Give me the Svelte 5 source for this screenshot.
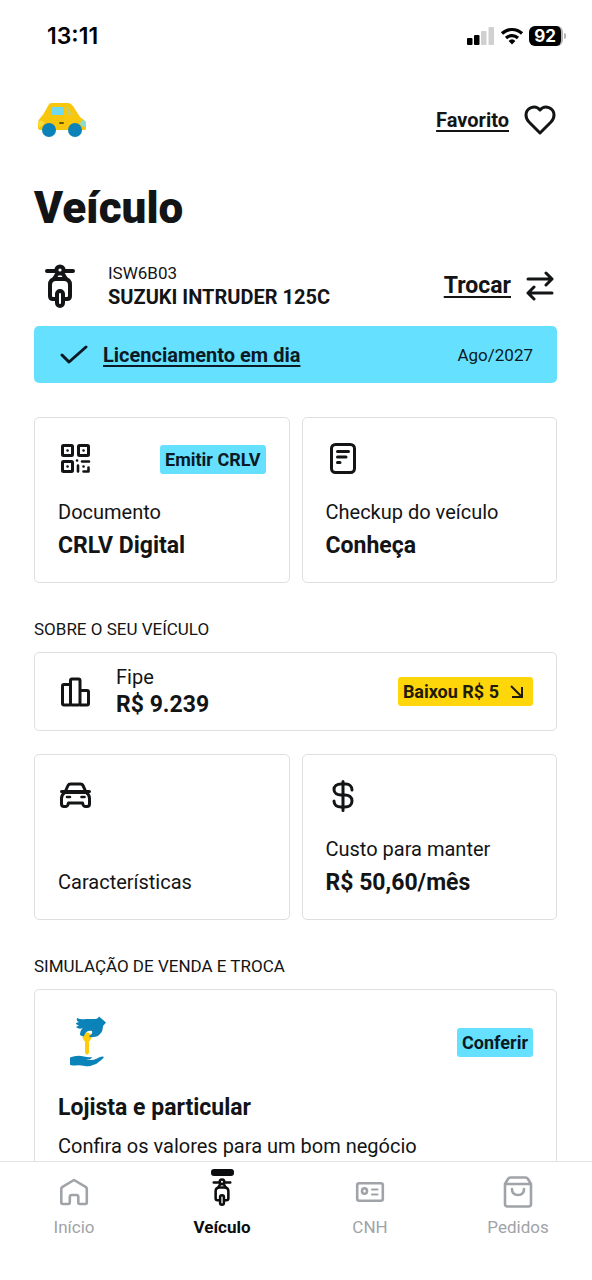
<script>
  let favorite = $state(false);
  let active = $state("veiculo");

  const tabs = [
    { id: "inicio", label: "Início" },
    { id: "veiculo", label: "Veículo" },
    { id: "cnh", label: "CNH" },
    { id: "pedidos", label: "Pedidos" },
  ];
</script>

{#snippet moto(size)}
  <svg width={size} height={size} viewBox="0 0 44 44" fill="none" stroke="currentColor" stroke-width="4" stroke-linecap="round" stroke-linejoin="round">
    <path d="M9 7h8M27 7h8" />
    <circle cx="22" cy="6" r="3.600" />
    <path d="M19 10l-3 5M25 10l3 5" />
    <path d="M17 35h-2q-3 0-3-3V21q0-6 6-6h8q6 0 6 6v11q0 3-3 3h-2" />
    <rect x="19" y="27" width="6" height="15" rx="3" />
  </svg>
{/snippet}

<div class="app">
  <div class="status">
    <span class="time">13:11</span>
    <div class="status_icons">
      <svg width="28" height="20" viewBox="0 0 28 20">
        <rect x="0" y="12" width="5.500" height="7" rx="1" />
        <rect x="7" y="9" width="5.500" height="10" rx="1" />
        <rect x="14" y="5" width="5.500" height="14" rx="1" fill="#d0d0d0" />
        <rect x="21.500" y="1" width="5.500" height="18" rx="1" fill="#d0d0d0" />
      </svg>
      <svg width="24" height="20" viewBox="0 0 24 20" fill="none" stroke="#000" stroke-width="3.200">
        <path d="M2 7.500a14.500 14.500 0 0 1 20 0" />
        <path d="M6 12a9 9 0 0 1 12 0" />
        <path d="M12 18.500l-3.400-3.600a5 5 0 0 1 6.800 0z" fill="#000" stroke="none" />
      </svg>
      <span class="battery"><span class="battery_level">92</span></span>
    </div>
  </div>

  <main>
    <header>
      <svg width="50" height="36" viewBox="0 0 50 36">
        <path d="M11 4q1-3 4-3h16q3 0 5 3l7 11 4 3q2 2 2 5v4q0 1-2 1H3q-2 0-2-2v-5q0-3 3-6 2-2 3-4z" fill="#f8c70d" />
        <path d="M16 5h10q1 0 1 1v7H14V7q0-2 2-2z" fill="#71d9ef" />
        <path d="M29 5h2l5 8h-5z" fill="#cfcc60" />
        <path d="M49 20v5q-4 0-6-3 1-4 4-4z" fill="#8bdcd0" />
        <path d="M1 21l3-3 3 2v2l-5 4z" fill="#f9db3c" />
        <rect x="22" y="20" width="5" height="2" rx="1" fill="#665a10" />
        <circle cx="12" cy="28" r="7" fill="#0c83b8" />
        <circle cx="38" cy="28" r="7" fill="#0c83b8" />
      </svg>
      <button class="favorite" aria-pressed={favorite} onclick={() => (favorite = !favorite)}>
        <span>Favorito</span>
        <svg width="32" height="30" viewBox="0 0 32 30" fill={favorite ? "currentColor" : "none"} stroke="currentColor" stroke-width="3" stroke-linejoin="round">
          <path d="M16 28L5 17Q2 14 2 10C2 3 11 -1 16 5 21 -1 30 3 30 10q0 4-3 7z" />
        </svg>
      </button>
    </header>

    <h1>Veículo</h1>

    <div class="vehicle">
      {@render moto(44)}
      <div class="vehicle_name">
        <p>ISW6B03</p>
        <strong>SUZUKI INTRUDER 125C</strong>
      </div>
      <button class="change">
        <span>Trocar</span>
        <svg width="28" height="30" viewBox="0 0 28 30" fill="none" stroke="currentColor" stroke-width="3" stroke-linecap="round" stroke-linejoin="round">
          <path d="M2 8h24M20 2l6 6-6 6M26 22H2M8 16l-6 6 6 6" />
        </svg>
      </button>
    </div>

    <a class="banner" href="#licenciamento">
      <svg width="28" height="20" viewBox="0 0 28 20" fill="none" stroke="currentColor" stroke-width="3" stroke-linecap="round" stroke-linejoin="round">
        <path d="M2 10l7 7L26 2" />
      </svg>
      <strong>Licenciamento em dia</strong>
      <span>Ago/2027</span>
    </a>

    <div class="cards">
      <a class="card" href="#crlv">
        <div class="card_top">
          <svg width="34" height="34" viewBox="0 0 34 34" fill="none" stroke="currentColor" stroke-width="3" stroke-linecap="round" stroke-linejoin="round">
            <rect x="4.500" y="3.500" width="10" height="10" rx="1" />
            <rect x="20.500" y="3.500" width="10" height="10" rx="1" />
            <rect x="4.500" y="19.500" width="10" height="10" rx="1" />
            <path d="M9.500 8.500h.1M25.500 8.500h.1M9.500 24.500h.1M19 18.500h.1M25.500 24.500h.1" stroke-width="2.600" />
            <path d="M20 23.500v6M24 19.500h7M25.500 29.500h5v-4" stroke-width="2.600" />
          </svg>
          <span class="badge">Emitir CRLV</span>
        </div>
        <p>Documento</p>
        <strong>CRLV Digital</strong>
      </a>
      <a class="card" href="#checkup">
        <div class="card_top">
          <svg width="34" height="34" viewBox="0 0 34 34" fill="none" stroke="currentColor" stroke-width="3" stroke-linecap="round" stroke-linejoin="round">
            <rect x="5.500" y="2.500" width="23" height="28" rx="4" />
            <path d="M11.500 9.500h11M11.500 15h8.500M11.500 20.500h2.500" />
          </svg>
        </div>
        <p>Checkup do veículo</p>
        <strong>Conheça</strong>
      </a>
    </div>

    <h2>SOBRE O SEU VEÍCULO</h2>

    <a class="fipe" href="#fipe">
      <svg width="34" height="34" viewBox="0 0 34 34" fill="none" stroke="currentColor" stroke-width="3" stroke-linejoin="round">
        <path d="M12.500 30H6q-1.500 0-1.500-1.500V11Q4.500 9.500 6 9.500h6.500M22 15.500h7q1.500 0 1.500 1.500v11.500q0 1.500-1.500 1.500h-7" />
        <rect x="12.500" y="4" width="9.500" height="26" rx="1.500" />
      </svg>
      <div class="fipe_value">
        <p>Fipe</p>
        <strong>R$ 9.239</strong>
      </div>
      <span class="badge yellow">
        Baixou R$ 5
        <svg width="14" height="14" viewBox="0 0 14 14" fill="none" stroke="currentColor" stroke-width="2">
          <path d="M1 1l11 11M12 2v10H2" />
        </svg>
      </span>
    </a>

    <div class="cards">
      <a class="card" href="#caracteristicas">
        <div class="card_top">
          <svg width="34" height="34" viewBox="0 0 34 34" fill="none" stroke="currentColor" stroke-width="3" stroke-linecap="round" stroke-linejoin="round">
            <path d="M7.500 12L10 6.500Q10.700 5 12.500 5h10q1.800 0 2.500 1.500L27.500 12M3.500 12.500h28" />
            <path d="M7 13.500h21q3.500 2 3.500 6V25q0 2.500-2.500 2.500h-1.500q-2 0-2.500-2l-.5-1.500h-14l-.5 1.500q-.5 2-2.500 2H6Q3.500 27.500 3.500 25v-5.500q0-4 3.500-6z" />
            <path d="M9 18h3M23.500 18h3" stroke-width="2.600" />
          </svg>
        </div>
        <p>Características</p>
      </a>
      <a class="card" href="#custo">
        <div class="card_top">
          <svg width="34" height="34" viewBox="0 0 34 34" fill="none" stroke="currentColor" stroke-width="3" stroke-linecap="round">
            <path d="M17 2.500v29M26 11c0-4-3-6-6-6h-5c-4 0-7 2-7 5.500s3 5.500 7 5.500h4c4 0 7 2 7 6s-3 6-7 6h-4c-4 0-7-2-7-6" />
          </svg>
        </div>
        <p>Custo para manter</p>
        <strong>R$ 50,60/mês</strong>
      </a>
    </div>

    <h2>SIMULAÇÃO DE VENDA E TROCA</h2>

    <a class="card offer" href="#simulacao">
      <div class="card_top">
        <svg width="56" height="56" viewBox="0 0 56 56">
          <circle cx="29" cy="23" r="4.500" fill="#ffcb0b" />
          <path d="M27 25h4v14l-2 2-2-2z" fill="#ffcb0b" />
          <path d="M19 4q4 2 9 1 5 0 9 0 3 0 4-2.500L48 8.500 45 12q0 5-3 8-2 3-7 3-3 1-4-1 4-2 3-5-6-1-8 5-1 1-4-1 0-5 3-7-4 2-7-1 2-1 3-2-3 0-3-2l3-1q-3-1-2-4z" fill="#0c83b8" />
          <path d="M12 43.500q7-3 14-1 4 1 8 .5-1 3-6 2.500 6 1.500 11-1 5-3 7-1.500-1 2-4 4-3 3-7 4-4 2-8 1-5-1-10-.5-5 0-5-1z" fill="#0c83b8" />
        </svg>
        <span class="badge">Conferir</span>
      </div>
      <strong>Lojista e particular</strong>
      <p>Confira os valores para um bom negócio</p>
    </a>
  </main>

  <nav>
    {#each tabs as tab}
      <button class:active={active === tab.id} onclick={() => (active = tab.id)}>
        <i></i>
        <div class="nav_icon">
          {#if tab.id === "inicio"}
            <svg width="32" height="32" viewBox="0 0 32 32" fill="none" stroke="currentColor" stroke-width="2.600" stroke-linejoin="round">
              <path d="M16 4L4.500 10.800q-1.200.7-1.200 2.200v13.500q0 1.500 1.500 1.500h5.500q1.500 0 1.500-1.500v-5.500q0-2 2-2h4.500q2 0 2 2v5.500q0 1.500 1.500 1.500h5.500q1.500 0 1.500-1.500V13q0-1.500-1.200-2.200z" />
            </svg>
          {:else if tab.id === "veiculo"}
            {@render moto(28)}
          {:else if tab.id === "cnh"}
            <svg width="32" height="32" viewBox="0 0 32 32" fill="none" stroke="currentColor" stroke-width="2.600" stroke-linecap="round">
              <rect x="3.200" y="7.200" width="25.600" height="17.600" rx="2" />
              <ellipse cx="10.500" cy="15" rx="2.500" ry="2.800" />
              <path d="M18 13.500h5.500M18 18.500h5.500" stroke-width="2.200" />
            </svg>
          {:else}
            <svg width="32" height="32" viewBox="0 0 32 32" fill="none" stroke="currentColor" stroke-width="2.600" stroke-linecap="round" stroke-linejoin="round">
              <path d="M3 8l3-5q1-1.500 2.500-1.500h15q1.500 0 2.500 1.500l3 5v20q0 2.500-2.500 2.500h-21Q3 30.500 3 28zM3 8h26" />
              <path d="M10 13q0 6 6 6t6-6" />
            </svg>
          {/if}
        </div>
        <span>{tab.label}</span>
      </button>
    {/each}
  </nav>
</div>

<style>
  :global(body) {
    background-color: #fff;
  }
  * {
    margin: 0;
    padding: 0;
    box-sizing: border-box;
  }
  svg {
    display: block;
    flex-shrink: 0;
  }
  button {
    border: 0;
    background: none;
    color: inherit;
    font: inherit;
    cursor: pointer;
  }
  a {
    color: inherit;
    text-decoration: none;
  }
  .app {
    height: 100vh;
    display: flex;
    flex-direction: column;
    font-family: Roboto, "Liberation Sans", sans-serif;
    color: #131415;
  }
  .status {
    height: 72px;
    flex-shrink: 0;
    padding: 0 26px 0 47px;
    display: flex;
    justify-content: space-between;
    align-items: center;
    color: #000;
    font-family: Inter, sans-serif;
  }
  .time {
    font-size: 23px;
    font-weight: 600;
  }
  .status_icons {
    display: flex;
    align-items: center;
    gap: 5px;
  }
  .battery {
    display: flex;
    align-items: center;
  }
  .battery::after {
    content: "";
    width: 2px;
    height: 6px;
    margin-left: 1px;
    border-radius: 0 2px 2px 0;
    background-color: #b4b4b4;
  }
  .battery_level {
    padding: 0 5px;
    border-radius: 6px;
    border-right: 2px solid #b4b4b4;
    background-color: #000;
    color: #fff;
    font-size: 17px;
    font-weight: 700;
    line-height: 20px;
  }
  main {
    flex: 1;
    min-height: 0;
    overflow: hidden;
    padding: 0 35px 0 34px;
  }
  header {
    height: 96px;
    padding-left: 3px;
    display: flex;
    justify-content: space-between;
    align-items: center;
  }
  .favorite, .change {
    display: flex;
    align-items: center;
    gap: 15px;
    font-weight: 700;
    text-decoration: underline;
    text-underline-offset: 3px;
  }
  .favorite {
    padding-right: 1px;
    font-size: 20px;
  }
  .change {
    margin-left: auto;
    padding-right: 3px;
    font-size: 23px;
  }
  h1 {
    font-size: 44px;
    font-weight: 900;
    line-height: 80px;
  }
  .vehicle {
    height: 78px;
    padding: 0 0 3px 4px;
    display: flex;
    align-items: center;
  }
  .vehicle_name {
    margin-left: 26px;
    font-size: 17px;
    line-height: 24px;
  }
  .vehicle_name strong {
    font-size: 20px;
  }
  .banner {
    height: 57px;
    padding: 0 24px 0 26px;
    display: flex;
    align-items: center;
    border-radius: 5px;
    background-color: #66e0ff;
    color: #0b1a24;
    font-size: 17px;
  }
  .banner strong {
    margin: 0 auto 0 15px;
    font-size: 20px;
    text-decoration: underline;
    text-underline-offset: 3px;
  }
  .cards {
    display: grid;
    grid-template-columns: 1fr 1fr;
    gap: 12px;
    margin-top: 34px;
  }
  .fipe + .cards {
    margin-top: 23px;
  }
  .card, .fipe {
    border: 1px solid #dfdfdf;
    border-radius: 5px;
    font-size: 20px;
  }
  .card {
    min-height: 166px;
    padding: 24px 23px 20px;
    display: flex;
    flex-direction: column;
    line-height: 33px;
  }
  .card_top {
    display: flex;
    justify-content: space-between;
    align-items: center;
    margin-bottom: auto;
  }
  .card strong, .fipe strong {
    font-size: 23px;
  }
  .badge {
    display: flex;
    align-items: center;
    gap: 11px;
    padding: 0 5px;
    border-radius: 3px;
    background-color: #66e0ff;
    color: #0b1a24;
    font-size: 18px;
    font-weight: 700;
    line-height: 29px;
  }
  .yellow {
    padding-right: 9px;
    margin-left: auto;
    background-color: #ffd60a;
    color: #201a08;
  }
  h2 {
    margin-top: 34px;
    font-size: 17px;
    font-weight: 400;
    line-height: 24px;
    margin-bottom: 11px;
  }
  .fipe {
    height: 79px;
    padding: 0 23px;
    display: flex;
    align-items: center;
  }
  .fipe_value {
    margin-left: 24px;
    line-height: 27px;
  }
  .offer {
    line-height: 39px;
  }
  .offer .card_top {
    margin-bottom: 18px;
  }
  nav {
    height: 119px;
    flex-shrink: 0;
    display: grid;
    grid-template-columns: repeat(4, 1fr);
    align-items: start;
    border-top: 1px solid #e2e2e2;
  }
  nav button {
    padding-top: 7px;
    display: flex;
    flex-direction: column;
    align-items: center;
    color: #a0a3a7;
    font-size: 17px;
    line-height: 24px;
  }
  nav i {
    width: 23px;
    height: 7px;
    border-radius: 3px;
  }
  .nav_icon {
    height: 32px;
    display: flex;
    align-items: center;
  }
  nav span {
    margin-top: 7px;
  }
  nav .active {
    color: #0c0d0e;
    font-weight: 700;
  }
  .active i {
    background-color: #0c0d0e;
  }
</style>
